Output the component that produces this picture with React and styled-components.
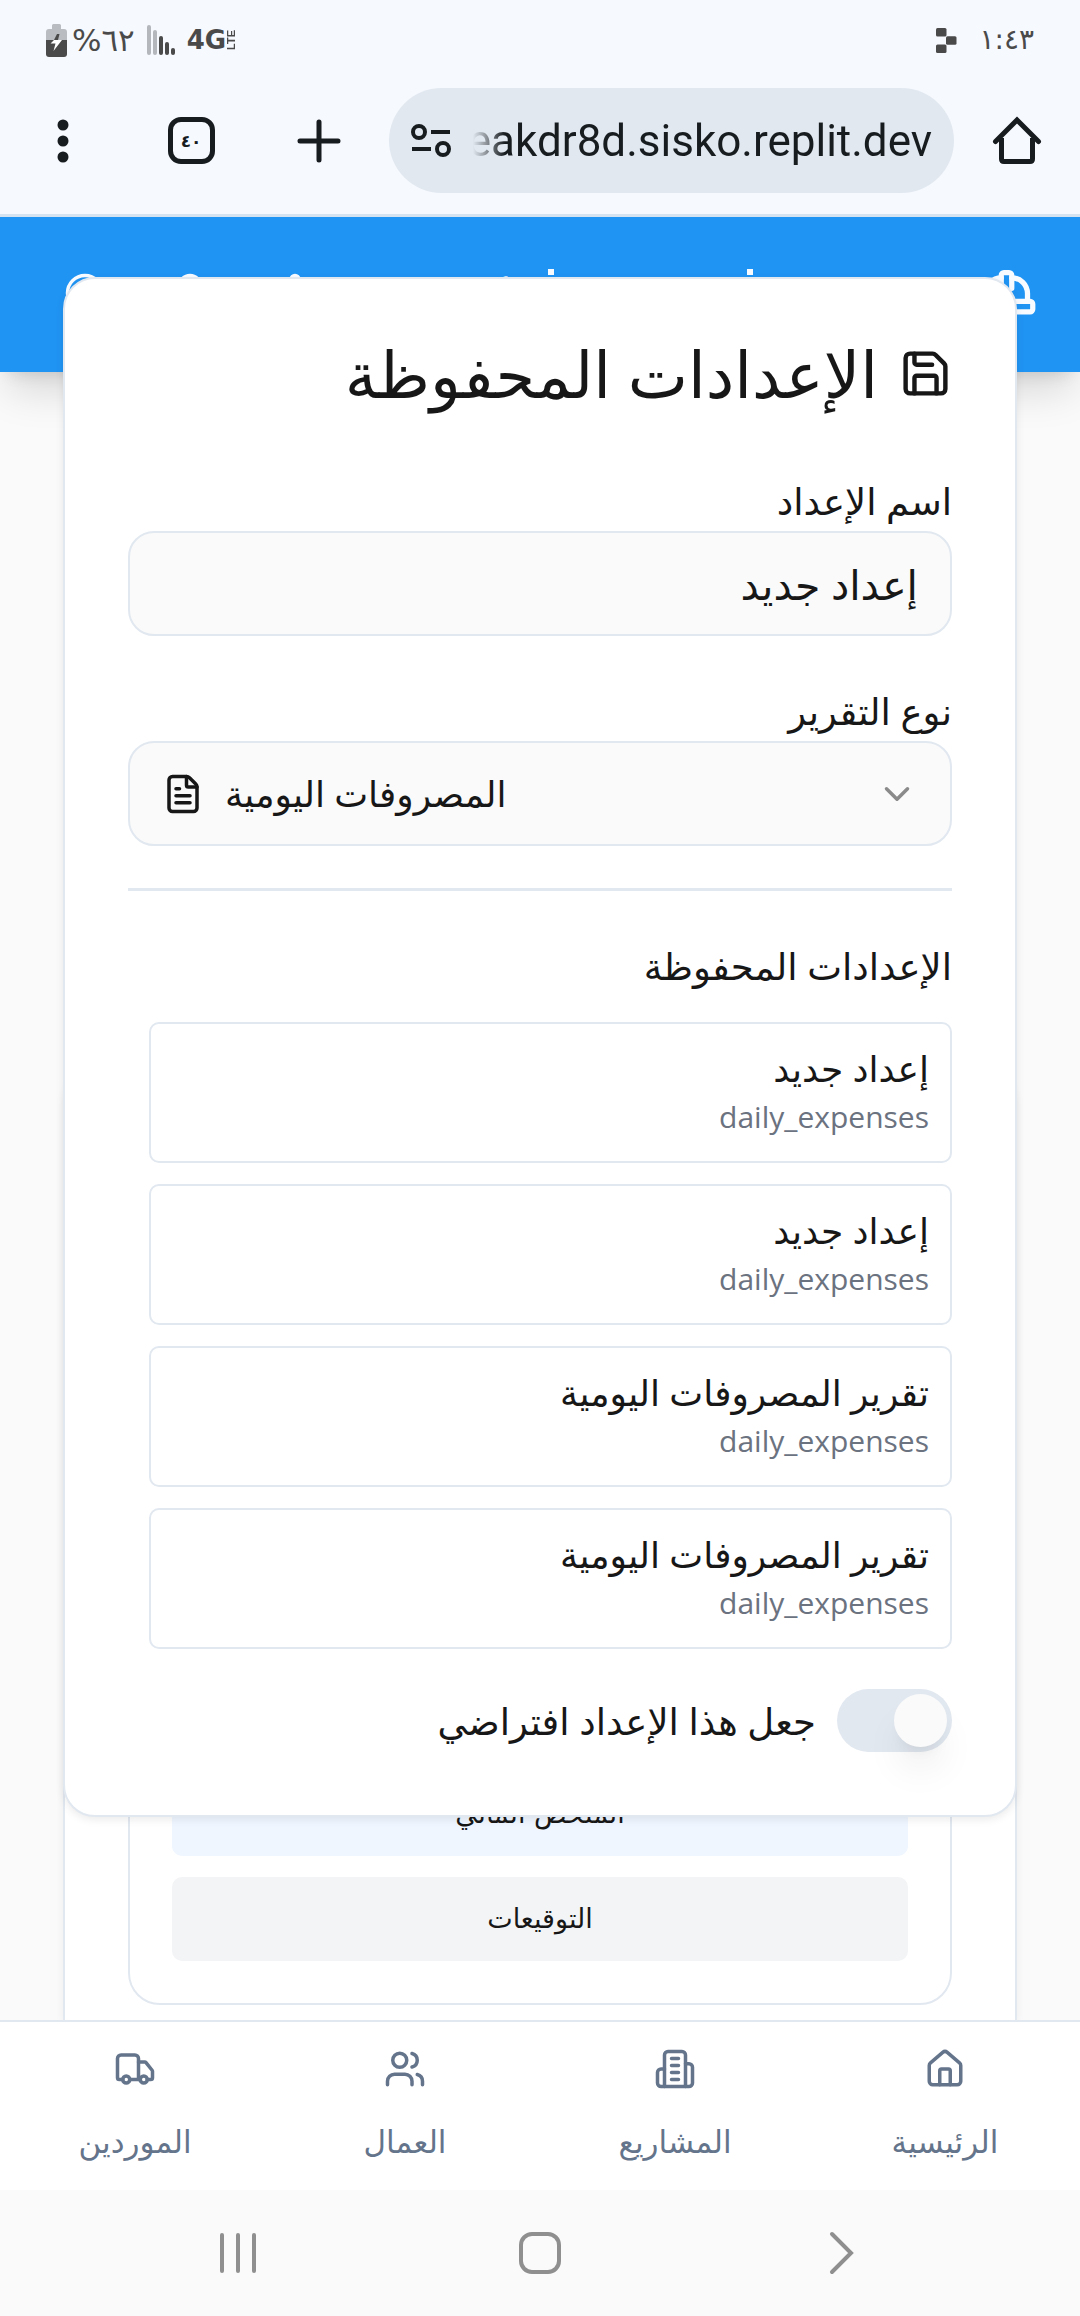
import React from "react";
import styled, { createGlobalStyle, css } from "styled-components";
import {
  Bell,
  ChevronDown,
  CircleHelp,
  FileText,
  House,
  Save,
  Settings,
  Truck,
  Users,
} from "lucide-react";

const colors = {
  chrome: "#f6f9fe",
  ink: "#171717",
  line: "#e2e8f0",
  muted: "#6b7280",
  slate: "#64748b",
  blue: "#2094f3",
  page: "#fafafa",
};

const GlobalStyle = createGlobalStyle`
  *, *::before, *::after { box-sizing: border-box; }
  body {
    margin: 0;
    background: ${colors.page};
    color: ${colors.ink};
    font-family: "Open Sans", "DejaVu Sans", sans-serif;
  }
  h1, h2, h3, p, ul { margin: 0; padding: 0; font-weight: 400; }
  ul { list-style: none; }
  button, input, select { font: inherit; color: inherit; }
  button { padding: 0; border: 0; background: none; cursor: pointer; }
`;

const Screen = styled.div`
  display: flex;
  flex-direction: column;
  height: 100vh;
  direction: rtl;
`;

const StatusBar = styled.div`
  display: flex;
  align-items: center;
  justify-content: space-between;
  height: 80px;
  padding: 0 46px;
  background: ${colors.chrome};
  color: #4a4a4a;
`;

const StatusGroup = styled.div`
  display: flex;
  align-items: center;
  direction: ltr;
  gap: ${(p) => p.$gap}px;
`;

const StatusText = styled.span`
  font-family: "DejaVu Sans", sans-serif;
  font-size: ${(p) => (p.$large ? 31 : 28)}px;
  line-height: 32px;
`;

const Toolbar = styled.div`
  display: flex;
  align-items: center;
  padding: 8px 37px 21px;
  background: ${colors.chrome};
  color: #171c1f;
`;

const ToolButton = styled.button`
  display: grid;
  place-items: center;
  width: 52px;
  height: 52px;
`;

const ToolGroup = styled.div`
  display: flex;
  gap: 76px;
`;

const AddressBar = styled.div`
  display: flex;
  align-items: center;
  flex: 1;
  min-width: 0;
  gap: 22px;
  height: 105px;
  margin: 0 37px 0 44px;
  padding: 0 22px;
  border-radius: 53px;
  background: #e1e8f0;
  direction: ltr;
`;

const AddressInput = styled.input`
  flex: 1;
  min-width: 0;
  padding: 0;
  border: 0;
  outline: 0;
  background: none;
  direction: rtl;
  font-family: Roboto, sans-serif;
  font-size: 44px;
  mask-image: linear-gradient(to right, transparent 0, #000 32px);
`;

const Viewport = styled.div`
  position: relative;
  display: flex;
  flex-direction: column;
  flex: 1;
  min-height: 0;
  overflow: hidden;
`;

const Header = styled.header`
  z-index: 1;
  display: flex;
  align-items: center;
  height: 158px;
  padding: 0 42px 3px 32px;
  border-top: 3px solid #d5e3f0;
  background: ${colors.blue};
  color: #f8fbff;
  box-shadow: 0 26px 39px -8px rgba(0, 0, 0, 0.14), 0 10px 16px -10px rgba(0, 0, 0, 0.14);
`;

const HeaderTitle = styled.div`
  display: flex;
  align-items: flex-start;
  height: 48px;
  margin-right: 222px;
`;

const HeaderDot = styled.span`
  width: 6px;
  height: 6px;
  background: currentColor;
  margin-left: ${(p) => p.$after}px;
`;

const HeaderHamza = styled.span`
  font-family: "DejaVu Sans", sans-serif;
  font-size: 20px;
  line-height: 20px;
`;

const HeaderActions = styled.div`
  display: flex;
  margin-right: auto;
`;

const HeaderButton = styled.button`
  display: grid;
  place-items: center;
  width: 105px;
  height: 105px;
`;

const Main = styled.main`
  display: flex;
  flex-direction: column;
  justify-content: flex-end;
  flex: 1;
  min-height: 0;
  padding: 0 63px;
  overflow: hidden;
`;

const PreviewCard = styled.section`
  padding: 63px 63px 15px;
  border: 2px solid ${colors.line};
  border-bottom: 0;
  border-radius: 32px 32px 0 0;
  background: #fff;
  box-shadow: 0 3px 8px rgba(0, 0, 0, 0.06);
`;

const PreviewPane = styled.div`
  display: flex;
  flex-direction: column;
  justify-content: flex-end;
  gap: 21px;
  min-height: 870px;
  padding: 42px;
  border: 2px solid ${colors.line};
  border-radius: 32px;
`;

const PreviewBlock = styled.p`
  padding: 21px;
  border-radius: 10px;
  background: ${(p) => (p.$tone === "blue" ? "#eff6ff" : "#f3f4f6")};
  font-family: "DejaVu Sans", sans-serif;
  font-size: 27px;
  line-height: 42px;
  text-align: center;
`;

const Dialog = styled.section`
  position: absolute;
  z-index: 2;
  top: 63px;
  right: 63px;
  left: 63px;
  display: flex;
  flex-direction: column;
  padding: 68px 63px 63px;
  border: 2px solid ${colors.line};
  border-radius: 32px;
  background: #fff;
  box-shadow: 0 3px 8px rgba(0, 0, 0, 0.08);
`;

const DialogTitle = styled.h2`
  display: flex;
  align-items: center;
  gap: 21px;
  margin-bottom: 80px;
  font-size: 64px;
  line-height: 53px;
`;

const Field = styled.div`
  display: flex;
  flex-direction: column;
  gap: 9px;
  margin-bottom: ${(p) => p.$space}px;
`;

const labelText = css`
  font-size: 37px;
  line-height: 42px;
`;

const Label = styled.label`
  ${labelText}
`;

const controlBox = css`
  height: 105px;
  border: 2px solid ${colors.line};
  border-radius: 26px;
  background: ${colors.page};
`;

const TextInput = styled.input`
  ${controlBox}
  width: 100%;
  padding: 0 32px;
  outline: 0;
  font-size: 41px;
`;

const SelectBox = styled.div`
  ${controlBox}
  display: flex;
  align-items: center;
  gap: 21px;
  padding: 0 32px;
`;

const Select = styled.select`
  flex: 1;
  min-width: 0;
  height: 100%;
  padding: 0;
  border: 0;
  outline: 0;
  appearance: none;
  background: none;
  font-size: 36px;
  text-align-last: left;
`;

const Divider = styled.hr`
  width: 100%;
  height: 3px;
  margin: 0 0 54px;
  border: 0;
  background: ${colors.line};
`;

const SectionTitle = styled.h3`
  ${labelText}
  margin-bottom: 35px;
`;

const SettingList = styled.ul`
  display: flex;
  flex-direction: column;
  gap: 21px;
  margin-bottom: 40px;
  padding-left: 21px;
`;

const SettingButton = styled.button`
  display: flex;
  flex-direction: column;
  justify-content: center;
  gap: 6px;
  width: 100%;
  height: 141px;
  padding: 0 21px;
  border: 2px solid ${colors.line};
  border-radius: 10px;
  text-align: right;
`;

const SettingName = styled.span`
  font-size: 36px;
  line-height: 42px;
`;

const SettingType = styled.span`
  color: ${colors.muted};
  font-size: 30px;
  line-height: 42px;
`;

const SwitchRow = styled.div`
  display: flex;
  align-items: center;
  gap: 21px;
`;

const Switch = styled.input`
  display: flex;
  align-items: center;
  width: 115px;
  height: 63px;
  margin: 0;
  padding: 0 5px;
  border-radius: 32px;
  appearance: none;
  background: ${colors.line};

  &::before {
    content: "";
    width: 53px;
    height: 53px;
    border-radius: 50%;
    background: ${colors.page};
    box-shadow: 0 26px 39px -8px rgba(0, 0, 0, 0.1), 0 10px 16px -10px rgba(0, 0, 0, 0.1);
  }
`;

const BottomNav = styled.nav`
  display: grid;
  grid-template-columns: repeat(4, 1fr);
  height: 170px;
  border-top: 2px solid ${colors.line};
  background: #fff;
`;

const NavLink = styled.a`
  display: flex;
  flex-direction: column;
  align-items: center;
  gap: 30px;
  padding-top: 26px;
  color: ${colors.slate};
  font-size: 31px;
  line-height: 42px;
  text-decoration: none;
`;

const SystemBar = styled.div`
  display: flex;
  align-items: center;
  justify-content: space-around;
  height: 126px;
  padding: 0 87px;
  background: ${colors.page};
  color: #8f8f8f;
`;

const SystemButton = styled.button`
  display: grid;
  place-items: center;
  width: 64px;
  height: 64px;
`;

const BatteryIcon = () => (
  <svg width="21" height="33" viewBox="0 0 21 33" aria-hidden="true">
    <path d="M6 1.500Q6 0 7.500 0H13.500Q15 0 15 1.500V5H18Q21 5 21 8V16H0V8Q0 5 3 5H6Z" fill="#b9bcc1" />
    <path d="M0 16H21V30Q21 33 18 33H3Q0 33 0 30Z" fill="#4a4a4a" />
    <path d="M11 10H13.500L12 16H8Z" fill="#4a4a4a" />
    <path d="M8 16H16L7.500 27L9.500 19.500H4.500Z" fill="#fff" />
  </svg>
);

const SignalIcon = () => (
  <svg width="28" height="30" viewBox="0 0 28 30" aria-hidden="true">
    <rect x="0" y="0" width="4" height="30" rx="2" fill="#b4b7bb" />
    <rect x="6" y="5" width="4" height="25" rx="2" fill="#b4b7bb" />
    <rect x="12" y="11" width="4" height="19" rx="2" fill="#4a4a4a" />
    <rect x="18" y="17" width="4" height="13" rx="2" fill="#4a4a4a" />
    <rect x="24" y="23" width="4" height="7" rx="2" fill="#4a4a4a" />
  </svg>
);

const NetworkBadge = styled.span`
  display: flex;
  align-items: center;
  font-family: "DejaVu Sans", sans-serif;
  font-size: 26px;
  font-weight: 700;
  line-height: 32px;
`;

const NetworkSub = styled.small`
  font-family: "Liberation Sans", sans-serif;
  font-size: 11px;
  line-height: 11px;
  writing-mode: vertical-rl;
  rotate: 180deg;
`;

const BlocksIcon = () => (
  <svg width="21" height="25" viewBox="0 0 21 25" fill="#4a4a4a" aria-hidden="true">
    <rect x="0" y="0" width="10.500" height="8.500" rx="1.500" />
    <rect x="10" y="8.200" width="10.500" height="8.500" rx="1.500" />
    <rect x="0" y="16.500" width="10.500" height="8.500" rx="1.500" />
  </svg>
);

const HomeOutlineIcon = () => (
  <svg width="50" height="50" viewBox="0 0 50 50" fill="none" stroke="currentColor" strokeWidth="5" aria-hidden="true">
    <path d="M3.500 25.500L25 4L46.500 25.500" strokeLinecap="round" />
    <path d="M9.500 22V43Q9.500 45.500 12 45.500H38Q40.500 45.500 40.500 43V22" />
  </svg>
);

const PlusIcon = () => (
  <svg width="44" height="44" viewBox="0 0 44 44" stroke="currentColor" strokeWidth="5" strokeLinecap="round" aria-hidden="true">
    <path d="M22 3V41M3 22H41" />
  </svg>
);

const TabCount = styled.span`
  display: grid;
  place-items: center;
  width: 47px;
  height: 47px;
  border: 5px solid currentColor;
  border-radius: 13px;
  font-family: "DejaVu Sans", sans-serif;
  font-size: 17px;
  font-weight: 700;
  line-height: 20px;
`;

const DotsIcon = () => (
  <svg width="12" height="44" viewBox="0 0 12 44" fill="currentColor" aria-hidden="true">
    <circle cx="6" cy="6" r="5.500" />
    <circle cx="6" cy="22" r="5.500" />
    <circle cx="6" cy="38" r="5.500" />
  </svg>
);

const TuneIcon = () => (
  <svg width="40" height="34" viewBox="0 0 40 34" fill="none" stroke="currentColor" strokeWidth="4" aria-hidden="true">
    <circle cx="8" cy="8" r="6" />
    <path d="M20 8H39M1 25H20" />
    <circle cx="32" cy="25" r="6" />
  </svg>
);

const HardHatIcon = () => (
  <svg width="63" height="63" viewBox="0 0 24 24" fill="none" stroke="currentColor" strokeWidth="2" strokeLinecap="round" strokeLinejoin="round" aria-hidden="true">
    <path d="M10 10V5a1 1 0 0 1 1-1h2a1 1 0 0 1 1 1v5" />
    <path d="M14 6a6 6 0 0 1 6 6v3" />
    <path d="M4 15v-3a6 6 0 0 1 6-6" />
    <rect x="2" y="15" width="20" height="4" rx="1" />
  </svg>
);

const BuildingIcon = () => (
  <svg width="42" height="42" viewBox="0 0 24 24" fill="none" stroke="currentColor" strokeWidth="2" strokeLinecap="round" strokeLinejoin="round" aria-hidden="true">
    <path d="M6 22V4a2 2 0 0 1 2-2h8a2 2 0 0 1 2 2v18Z" />
    <path d="M6 12H4a2 2 0 0 0-2 2v6a2 2 0 0 0 2 2h2" />
    <path d="M18 9h2a2 2 0 0 1 2 2v9a2 2 0 0 1-2 2h-2" />
    <path d="M10 6h4M10 10h4M10 14h4M10 18h4" />
  </svg>
);

const RecentsIcon = () => (
  <svg width="40" height="42" viewBox="0 0 40 42" stroke="currentColor" strokeWidth="4" strokeLinecap="round" aria-hidden="true">
    <path d="M4 3V39M20 3V39M36 3V39" />
  </svg>
);

const HomeSquareIcon = () => (
  <svg width="42" height="42" viewBox="0 0 42 42" fill="none" stroke="currentColor" strokeWidth="4" aria-hidden="true">
    <rect x="2" y="2" width="38" height="38" rx="11" />
  </svg>
);

const BackIcon = () => (
  <svg width="26" height="44" viewBox="0 0 26 44" fill="none" stroke="currentColor" strokeWidth="4" strokeLinecap="round" aria-hidden="true">
    <path d="M3 3L22 22L3 41" />
  </svg>
);

const savedSettings = [
  { id: 1, name: "إعداد جديد", type: "daily_expenses" },
  { id: 2, name: "إعداد جديد", type: "daily_expenses" },
  { id: 3, name: "تقرير المصروفات اليومية", type: "daily_expenses" },
  { id: 4, name: "تقرير المصروفات اليومية", type: "daily_expenses" },
];

const navItems = [
  { label: "الرئيسية", Icon: House },
  { label: "المشاريع", Icon: BuildingIcon },
  { label: "العمال", Icon: Users },
  { label: "الموردين", Icon: Truck },
];

export default function App() {
  return (
    <Screen lang="ar">
      <GlobalStyle />
      <StatusBar>
        <StatusGroup $gap={22}>
          <BlocksIcon />
          <StatusText>١:٤٣</StatusText>
        </StatusGroup>
        <StatusGroup $gap={12}>
          <StatusGroup $gap={5}>
            <BatteryIcon />
            <StatusText $large>%٦٢</StatusText>
          </StatusGroup>
          <SignalIcon />
          <NetworkBadge>
            4G<NetworkSub>LTE</NetworkSub>
          </NetworkBadge>
        </StatusGroup>
      </StatusBar>

      <Toolbar>
        <ToolButton aria-label="الصفحة الرئيسية">
          <HomeOutlineIcon />
        </ToolButton>
        <AddressBar>
          <TuneIcon />
          <AddressInput aria-label="العنوان" defaultValue="eakdr8d.sisko.replit.dev" />
        </AddressBar>
        <ToolGroup>
          <ToolButton aria-label="علامة تبويب جديدة">
            <PlusIcon />
          </ToolButton>
          <ToolButton aria-label="علامات التبويب">
            <TabCount>٤٠</TabCount>
          </ToolButton>
          <ToolButton aria-label="المزيد">
            <DotsIcon />
          </ToolButton>
        </ToolGroup>
      </Toolbar>

      <Viewport>
        <Header>
          <HardHatIcon />
          <HeaderTitle aria-hidden="true">
            <HeaderDot $after={193} />
            <HeaderDot $after={38} />
            <HeaderHamza>ء</HeaderHamza>
          </HeaderTitle>
          <HeaderActions>
            <HeaderButton aria-label="الإعدادات">
              <Settings size={42} />
            </HeaderButton>
            <HeaderButton aria-label="الإشعارات">
              <Bell size={42} />
            </HeaderButton>
            <HeaderButton aria-label="المساعدة">
              <CircleHelp size={42} />
            </HeaderButton>
          </HeaderActions>
        </Header>

        <Main>
          <PreviewCard>
            <PreviewPane>
              <PreviewBlock $tone="blue">الملخص المالي</PreviewBlock>
              <PreviewBlock>التوقيعات</PreviewBlock>
            </PreviewPane>
          </PreviewCard>
        </Main>

        <Dialog role="dialog" aria-labelledby="dialog-title">
          <DialogTitle id="dialog-title">
            <Save size={53} />
            الإعدادات المحفوظة
          </DialogTitle>
          <Field $space={54}>
            <Label htmlFor="setting-name">اسم الإعداد</Label>
            <TextInput id="setting-name" defaultValue="إعداد جديد" />
          </Field>
          <Field $space={42}>
            <Label htmlFor="report-type">نوع التقرير</Label>
            <SelectBox>
              <ChevronDown size={42} color="#8a8a8a" />
              <Select id="report-type" defaultValue="daily_expenses">
                <option value="daily_expenses">المصروفات اليومية</option>
              </Select>
              <FileText size={42} />
            </SelectBox>
          </Field>
          <Divider />
          <SectionTitle>الإعدادات المحفوظة</SectionTitle>
          <SettingList>
            {savedSettings.map((s) => (
              <li key={s.id}>
                <SettingButton>
                  <SettingName>{s.name}</SettingName>
                  <SettingType>{s.type}</SettingType>
                </SettingButton>
              </li>
            ))}
          </SettingList>
          <SwitchRow>
            <Switch type="checkbox" role="switch" id="make-default" />
            <Label htmlFor="make-default">جعل هذا الإعداد افتراضي</Label>
          </SwitchRow>
        </Dialog>
      </Viewport>

      <BottomNav>
        {navItems.map(({ label, Icon }) => (
          <NavLink href="#" key={label}>
            <Icon size={42} />
            {label}
          </NavLink>
        ))}
      </BottomNav>

      <SystemBar>
        <SystemButton aria-label="رجوع">
          <BackIcon />
        </SystemButton>
        <SystemButton aria-label="الشاشة الرئيسية">
          <HomeSquareIcon />
        </SystemButton>
        <SystemButton aria-label="التطبيقات الأخيرة">
          <RecentsIcon />
        </SystemButton>
      </SystemBar>
    </Screen>
  );
}
